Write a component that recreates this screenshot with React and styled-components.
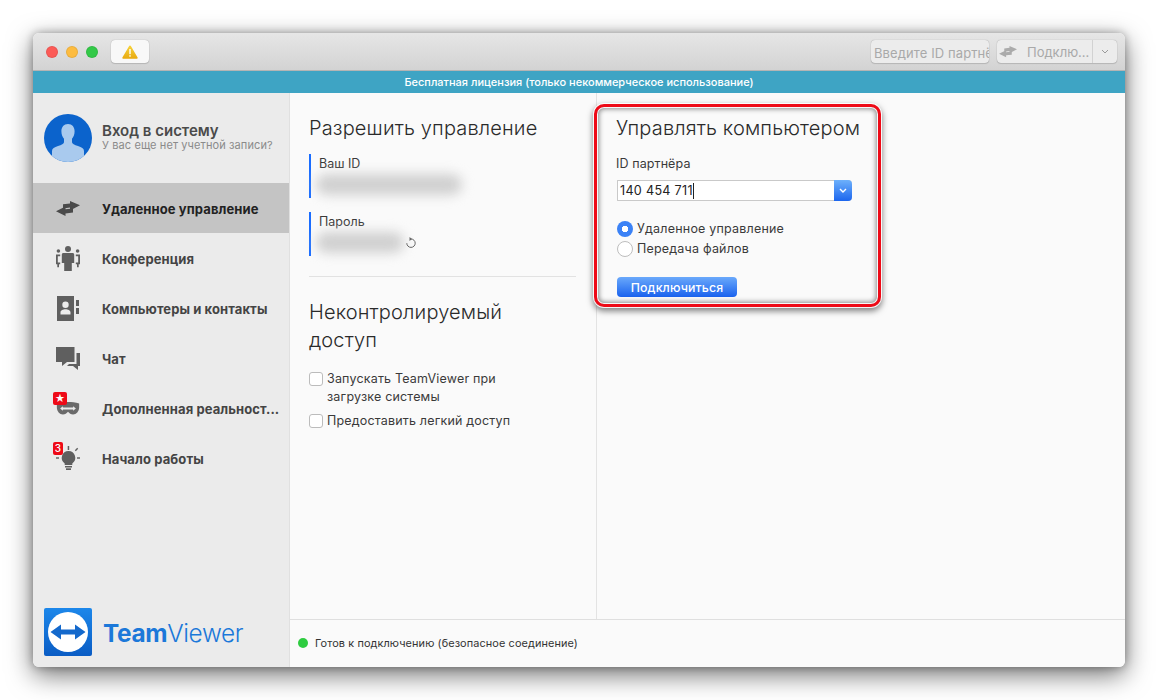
import React from "react";
import styled, { createGlobalStyle, css } from "styled-components";

const GlobalStyle = createGlobalStyle`
  html, body {
    margin: 0;
    background: #ffffff;
  }
  body {
    width: 1158px;
    height: 700px;
    overflow: hidden;
    font-family: Inter, "Noto Sans", "Liberation Sans", sans-serif;
    color: #2b2b2b;
  }
  * {
    box-sizing: border-box;
  }
`;

const Page = styled.div`
  padding: 33px;
  width: 1158px;
  height: 700px;
`;

const Window = styled.div`
  width: 1092px;
  height: 634px;
  display: flex;
  flex-direction: column;
  border-radius: 6px;
  overflow: hidden;
  box-shadow: 0 8px 26px rgba(0, 0, 0, 0.55), 0 0 8px rgba(0, 0, 0, 0.3);
`;

const TitleBar = styled.div`
  height: 38px;
  flex: none;
  display: flex;
  align-items: center;
  padding: 0 8px 0 13px;
  background: linear-gradient(#e6e6e6, #d3d3d3);
  border-bottom: 1px solid #b4b4b4;
`;

const Lights = styled.div`
  display: flex;
  gap: 8px;
  margin-right: 13px;
`;

const Light = styled.span`
  width: 12px;
  height: 12px;
  border-radius: 50%;
  background: ${(p) => p.$color};
  border: 1px solid rgba(0, 0, 0, 0.08);
`;

const ToolButton = styled.div`
  height: 23px;
  border-radius: 4px;
  background: #f8f8f8;
  box-shadow: 0 0 1px rgba(0, 0, 0, 0.35), 0 1px 1px rgba(0, 0, 0, 0.12);
  display: flex;
  align-items: center;
`;

const WarningButton = styled(ToolButton)`
  width: 38px;
  justify-content: center;
`;

const Spacer = styled.div`
  flex: 1;
`;

const PartnerField = styled(ToolButton)`
  width: 118px;
  margin-right: 8px;
  padding: 2px 0 0 3px;
  background: #ececec;
  font-size: 13px;
  color: #a9a9a9;
  overflow: hidden;
  white-space: nowrap;
  letter-spacing: 0.1px;
`;

const ConnectGroup = styled(ToolButton)`
  width: 120px;
  background: #ececec;
  font-size: 13px;
  color: #a9a9a9;
`;

const ConnectLabel = styled.div`
  flex: 1;
  display: flex;
  align-items: center;
  padding: 1px 0 0 2px;
  gap: 10px;
`;

const ConnectArrow = styled.div`
  width: 25px;
  height: 23px;
  border-left: 1px solid #d2d2d2;
  display: flex;
  align-items: center;
  justify-content: center;
`;

const LicenseBar = styled.div`
  height: 22px;
  flex: none;
  background: #3ea4c4;
  color: #ffffff;
  font-size: 11px;
  font-weight: 500;
  display: flex;
  align-items: center;
  justify-content: center;
`;

const Body = styled.div`
  flex: 1;
  min-height: 0;
  display: flex;
`;

const Sidebar = styled.aside`
  width: 257px;
  flex: none;
  background: #ebebeb;
  border-right: 1px solid #e0e0e0;
  display: flex;
  flex-direction: column;
`;

const Account = styled.div`
  height: 90px;
  flex: none;
  padding: 0 11px 1px;
  display: flex;
  align-items: center;
  gap: 10px;
`;

const AccountName = styled.div`
  font-size: 15px;
  font-weight: 600;
  color: #4a4a4a;
  line-height: 16px;
`;

const AccountHint = styled.div`
  font-size: 11px;
  color: #8a8a8a;
  line-height: 13px;
  letter-spacing: 0.1px;
`;

const NavItem = styled.div`
  height: 50px;
  flex: none;
  display: flex;
  align-items: center;
  background: ${(p) => (p.$active ? "#c4c4c4" : "transparent")};
  color: ${(p) => (p.$active ? "#222222" : "#444444")};
  font-size: 13px;
  font-weight: 700;
  letter-spacing: 0.1px;
  white-space: nowrap;
`;

const NavIcon = styled.div`
  width: 69px;
  height: 50px;
  flex: none;
  padding-left: 23px;
  display: flex;
  align-items: center;
  position: relative;
`;

const NavLabel = styled.span`
  padding-top: 1px;
`;

const Badge = styled.span`
  position: absolute;
  left: 20px;
  top: 9px;
  width: ${(p) => p.$width}px;
  height: 13px;
  border-radius: 2px;
  background: #ee0a17;
  color: #ffffff;
  font-size: 10px;
  line-height: 13px;
  font-weight: 500;
  text-align: center;
`;

const Brand = styled.div`
  margin-top: auto;
  padding: 0 11px 11px;
  display: flex;
  align-items: center;
  gap: 11px;
`;

const BrandName = styled.div`
  font-size: 24.4px;
  line-height: 30px;
  padding-top: 2px;
  color: #1b78d9;
  letter-spacing: -0.35px;
  font-weight: 300;

  b {
    font-weight: 700;
  }
`;

const Main = styled.main`
  flex: 1;
  min-width: 0;
  display: flex;
  flex-direction: column;
  background: #fafafa;
`;

const Columns = styled.div`
  flex: 1;
  min-height: 0;
  display: flex;
`;

const AllowPanel = styled.section`
  width: 307px;
  flex: none;
  padding: 23px 20px 0 19px;
  border-right: 1px solid #e3e3e3;
`;

const ControlPanel = styled.section`
  flex: 1;
  position: relative;
  padding: 23px 0 0 19px;
`;

const Heading = styled.h2`
  margin: 0;
  font-size: 20px;
  line-height: 24px;
  font-weight: 300;
  color: #2a2a2a;
  letter-spacing: 0.15px;
`;

const InfoBlock = styled.div`
  height: 44px;
  margin-top: 14px;
  border-left: 2px solid #1a6dff;
  padding: 1px 0 0 8px;
  font-size: 12.5px;
  line-height: 17px;
  color: #3a3a3a;
  position: relative;
`;

const BlurredValue = styled.div`
  width: ${(p) => p.$width}px;
  height: 21px;
  margin: 2px 0 0 -3px;
  border-radius: 11px;
  background: #d0d0d0;
  filter: blur(6px);
`;

const RefreshIcon = styled.svg`
  position: absolute;
  left: 94px;
  top: 24px;
`;

const Divider = styled.div`
  height: 1px;
  background: #e2e2e2;
  margin: 20px 0 0;
`;

const Subheading = styled(Heading)`
  line-height: 28px;
  margin-top: 21px;
`;

const CheckRow = styled.label`
  display: flex;
  gap: 4px;
  margin-top: ${(p) => p.$top}px;
  font-size: 12.5px;
  line-height: 18px;
  color: #3a3a3a;
  letter-spacing: 0.18px;
`;

const CheckBox = styled.span`
  width: 14px;
  height: 14px;
  flex: none;
  margin-top: 2px;
  border: 1px solid #bcbcbc;
  border-radius: 3px;
  background: #ffffff;
`;

const FieldLabel = styled.div`
  margin-top: 15px;
  font-size: 12.5px;
  line-height: 17px;
  color: #3a3a3a;
  letter-spacing: 0.1px;
`;

const Combo = styled.div`
  width: 235px;
  height: 21px;
  margin: 8px 0 0 1px;
  display: flex;
  background: #ffffff;
  border: 1px solid #c9c9c9;
  border-right: 0;
  border-radius: 1px 4px 4px 1px;
`;

const ComboInput = styled.div`
  flex: 1;
  display: flex;
  align-items: center;
  padding-left: 2px;
  font-size: 12.6px;
  color: #222222;
  letter-spacing: 0.3px;
`;

const Caret = styled.span`
  width: 1px;
  height: 16px;
  background: #222222;
`;

const ComboButton = styled.div`
  width: 18px;
  margin: -1px 0;
  border-radius: 0 4px 4px 0;
  background: linear-gradient(#6db0fb, #1c66ee);
  display: flex;
  align-items: center;
  justify-content: center;
`;

const RadioList = styled.div`
  margin: 19px 0 0 1px;
  display: flex;
  flex-direction: column;
  gap: 3px;
`;

const RadioRow = styled.label`
  display: flex;
  align-items: center;
  gap: 4px;
  height: 17px;
  font-size: 12.5px;
  color: #3a3a3a;
  letter-spacing: 0.2px;
`;

const Radio = styled.span`
  width: 16px;
  height: 16px;
  flex: none;
  border-radius: 50%;
  ${(p) =>
    p.$checked
      ? css`
          background: radial-gradient(circle, #ffffff 0 3px, #3b82f6 3.5px);
        `
      : css`
          background: #ffffff;
          border: 1px solid #bdbdbd;
        `}
`;

const ConnectButton = styled.button`
  display: block;
  width: 120px;
  height: 20px;
  margin: 20px 0 0 1px;
  padding: 0;
  border: 0;
  border-radius: 4px;
  background: linear-gradient(#6aa9fb, #1a62ee);
  color: #ffffff;
  font-family: inherit;
  font-size: 12.3px;
  font-weight: 500;
  letter-spacing: 0.15px;
`;

const Highlight = styled.div`
  position: absolute;
  left: -3px;
  top: 11px;
  width: 287px;
  height: 203px;
  border: 3px solid #ee0a17;
  border-radius: 10px;
  box-shadow: 0 0 0 1px rgba(255, 255, 255, 0.9), 0 3px 6px 1px rgba(0, 0, 0, 0.5),
    inset 0 0 0 1px rgba(255, 255, 255, 0.9), inset 0 0 5px 2px rgba(0, 0, 0, 0.45);
  pointer-events: none;
`;

const StatusBar = styled.footer`
  height: 48px;
  flex: none;
  border-top: 1px solid #dfdfdf;
  display: flex;
  align-items: center;
  gap: 7px;
  padding: 0 0 2px 8px;
  font-size: 10.9px;
  color: #333333;
  letter-spacing: 0.1px;
`;

const StatusDot = styled.span`
  width: 10px;
  height: 10px;
  border-radius: 50%;
  background: #2ecc40;
`;

const SwapIcon = ({ color = "#4a4a4a", w = 24 }) => (
  <svg width={w} height={w * 0.625} viewBox="0 0 24 15" fill={color}>
    <path d="M14 0l10 4.300-10 5.200V6.600l-7 .9V3.300l7-.9z" />
    <path d="M9.500 5.500L0 10.300 9.500 15v-2.600l7.500-.9V7.400l-7.500.9z" />
  </svg>
);

const WarningIcon = () => (
  <svg width="16" height="14" viewBox="0 0 16 14">
    <defs>
      <linearGradient id="warn" x1="0" y1="0" x2="0" y2="1">
        <stop offset="0" stopColor="#f6d33c" />
        <stop offset="1" stopColor="#e8a90f" />
      </linearGradient>
    </defs>
    <path d="M8 0.5c.5 0 .8.3 1 .7l6.600 11.300c.3.600 0 1.200-.7 1.200H1.100c-.7 0-1-.6-.7-1.200L7 1.200c.2-.4.5-.7 1-.7z" fill="url(#warn)" />
    <rect x="7.300" y="4" width="1.400" height="5.200" fill="#fff" />
    <rect x="7.300" y="10.200" width="1.400" height="1.500" fill="#fff" />
  </svg>
);

const Avatar = () => (
  <svg width="48" height="48" viewBox="0 0 48 48">
    <clipPath id="avatar-clip">
      <circle cx="24" cy="24" r="24" />
    </clipPath>
    <g clipPath="url(#avatar-clip)">
      <rect width="48" height="48" fill="#0b63cc" />
      <path
        d="M24 10c4.200 0 6.600 3.200 6.600 7.200 0 3-1 5.800-2.600 7.600v3.400c0 1.600 2.400 2.600 6 3.800 3.600 1.200 6 2.600 6 5v11H8V37c0-2.400 2.400-3.800 6-5 3.600-1.200 6-2.200 6-3.800v-3.400c-1.600-1.800-2.600-4.600-2.600-7.600C17.400 13.200 19.800 10 24 10z"
        fill="#a9caee"
      />
    </g>
  </svg>
);

const ConferenceIcon = () => (
  <svg width="24" height="25" viewBox="0 0 24 25" fill="#5f5f5f">
    <circle cx="12" cy="3" r="3" />
    <path d="M7.500 7h9c1 0 1.700.7 1.700 1.700V17h-2.400v8H8.200v-8H5.800V8.700C5.800 7.700 6.500 7 7.500 7z" />
    <circle cx="2.400" cy="5" r="1.800" />
    <circle cx="21.600" cy="5" r="1.800" />
    <path d="M0 8.500h4.200v1.700H1.800v6.400h2.400v1.700H3v3H1.300v-3H0z" />
    <path d="M24 8.500h-4.200v1.700h2.400v6.400h-2.400v1.700H21v3h1.700v-3H24z" />
  </svg>
);

const ContactsIcon = () => (
  <svg width="24" height="25" viewBox="0 0 24 25" fill="#5f5f5f">
    <path
      fillRule="evenodd"
      d="M1 0h17v25H1zM9.500 5.500a3.200 3.200 0 1 0 0 6.400 3.200 3.200 0 0 0 0-6.400zM4.500 18.500h10v-2.300c0-1.800-2.600-3-5-3s-5 1.200-5 3z"
    />
    <rect x="20" y="4" width="3" height="6" />
    <rect x="20" y="12" width="3" height="6" />
  </svg>
);

const ChatIcon = () => (
  <svg width="24" height="23" viewBox="0 0 24 23" fill="#5f5f5f">
    <path d="M0 0h18.500v15H11l-5 4v-4H0z" />
    <path d="M20.500 6H24v13h-2v4l-5-4h-6l2-2h7.500z" />
  </svg>
);

const MaskIcon = () => (
  <svg width="24" height="13" viewBox="0 0 24 14">
    <path
      d="M0 1.500C4 .2 8 0 12 0s8 .2 12 1.500V6c0 4-3 7.500-6.500 7.500-2.500 0-4-1.500-5.500-3-1.500 1.500-3 3-5.500 3C3 13.500 0 10 0 6z"
      fill="#6a6a6a"
    />
    <path d="M3.500 7l3-2.500V6h11V4.500l3 2.500-3 2.500V8h-11v1.500z" fill="#ebebeb" />
  </svg>
);

const BulbIcon = () => (
  <svg width="24" height="24" viewBox="0 0 24 24" fill="#5f5f5f">
    <path d="M12.500 5a6.800 6.800 0 0 1 3.800 12.400V19H8.700v-1.600A6.800 6.800 0 0 1 12.500 5z" />
    <rect x="9" y="20" width="7" height="1.500" />
    <rect x="10" y="22.300" width="5" height="1.700" />
    <rect x="11.700" y="0" width="1.500" height="4" />
    <path d="M18.800 4.200l2.400-2.500 1 1-2.400 2.500z" />
    <rect x="21" y="11.300" width="3" height="1.400" />
    <rect x="0" y="11.300" width="3" height="1.400" />
  </svg>
);

const LogoMark = () => (
  <svg width="48" height="48" viewBox="0 0 48 48">
    <defs>
      <linearGradient id="logo-bg" x1="0" y1="0" x2="0" y2="1">
        <stop offset="0" stopColor="#1c87ea" />
        <stop offset="1" stopColor="#0a5cc4" />
      </linearGradient>
    </defs>
    <rect width="48" height="48" rx="2" fill="url(#logo-bg)" />
    <circle cx="24" cy="24" r="20" fill="#ffffff" />
    <path d="M6.500 24L17 16.500V21.500h14v-5L41.500 24 31 31.500v-5H17v5z" fill="#1469cc" />
  </svg>
);

const navItems = [
  { label: "Удаленное управление", icon: <SwapIcon />, active: true },
  { label: "Конференция", icon: <ConferenceIcon /> },
  { label: "Компьютеры и контакты", icon: <ContactsIcon /> },
  { label: "Чат", icon: <ChatIcon /> },
  { label: "Дополненная реальност...", icon: <MaskIcon />, badge: "★", badgeWidth: 14 },
  { label: "Начало работы", icon: <BulbIcon />, badge: "3", badgeWidth: 10 },
];

export default function App() {
  return (
    <Page>
      <GlobalStyle />
      <Window>
        <TitleBar>
          <Lights>
            <Light $color="#fc5b57" />
            <Light $color="#fdbc40" />
            <Light $color="#33c948" />
          </Lights>
          <WarningButton>
            <WarningIcon />
          </WarningButton>
          <Spacer />
          <PartnerField>Введите ID партнёра</PartnerField>
          <ConnectGroup>
            <ConnectLabel>
              <SwapIcon color="#ababab" w={18} />
              Подклю...
            </ConnectLabel>
            <ConnectArrow>
              <svg width="8" height="5" viewBox="0 0 8 5" fill="none" stroke="#9a9a9a" strokeWidth="1">
                <path d="M1 1l3 3 3-3" />
              </svg>
            </ConnectArrow>
          </ConnectGroup>
        </TitleBar>
        <LicenseBar>Бесплатная лицензия (только некоммерческое использование)</LicenseBar>
        <Body>
          <Sidebar>
            <Account>
              <Avatar />
              <div>
                <AccountName>Вход в систему</AccountName>
                <AccountHint>У вас еще нет учетной записи?</AccountHint>
              </div>
            </Account>
            {navItems.map((item) => (
              <NavItem key={item.label} $active={item.active}>
                <NavIcon>
                  {item.icon}
                  {item.badge && <Badge $width={item.badgeWidth}>{item.badge}</Badge>}
                </NavIcon>
                <NavLabel>{item.label}</NavLabel>
              </NavItem>
            ))}
            <Brand>
              <LogoMark />
              <BrandName>
                <b>Team</b>Viewer
              </BrandName>
            </Brand>
          </Sidebar>
          <Main>
            <Columns>
              <AllowPanel>
                <Heading>Разрешить управление</Heading>
                <InfoBlock>
                  Ваш ID
                  <BlurredValue $width={146} />
                </InfoBlock>
                <InfoBlock>
                  Пароль
                  <BlurredValue $width={88} />
                  <RefreshIcon width="12" height="13" viewBox="0 0 12 13" fill="none" stroke="#666666" strokeWidth="1">
                    <path d="M6 3a4.200 4.200 0 1 1-4.200 4.200" />
                    <path d="M4.500 1l2.500 2-2.500 2z" fill="#666666" stroke="none" />
                  </RefreshIcon>
                </InfoBlock>
                <Divider />
                <Subheading>
                  Неконтролируемый
                  <br />
                  доступ
                </Subheading>
                <CheckRow $top={16}>
                  <CheckBox />
                  <span>
                    Запускать TeamViewer при
                    <br />
                    загрузке системы
                  </span>
                </CheckRow>
                <CheckRow $top={6}>
                  <CheckBox />
                  <span>Предоставить легкий доступ</span>
                </CheckRow>
              </AllowPanel>
              <ControlPanel>
                <Heading>Управлять компьютером</Heading>
                <FieldLabel>ID партнёра</FieldLabel>
                <Combo>
                  <ComboInput>
                    140 454 711
                    <Caret />
                  </ComboInput>
                  <ComboButton>
                    <svg width="8" height="5" viewBox="0 0 8 5" fill="none" stroke="#ffffff" strokeWidth="1.400">
                      <path d="M1 1l3 3 3-3" />
                    </svg>
                  </ComboButton>
                </Combo>
                <RadioList>
                  <RadioRow>
                    <Radio $checked />
                    Удаленное управление
                  </RadioRow>
                  <RadioRow>
                    <Radio />
                    Передача файлов
                  </RadioRow>
                </RadioList>
                <ConnectButton>Подключиться</ConnectButton>
                <Highlight />
              </ControlPanel>
            </Columns>
            <StatusBar>
              <StatusDot />
              Готов к подключению (безопасное соединение)
            </StatusBar>
          </Main>
        </Body>
      </Window>
    </Page>
  );
}
